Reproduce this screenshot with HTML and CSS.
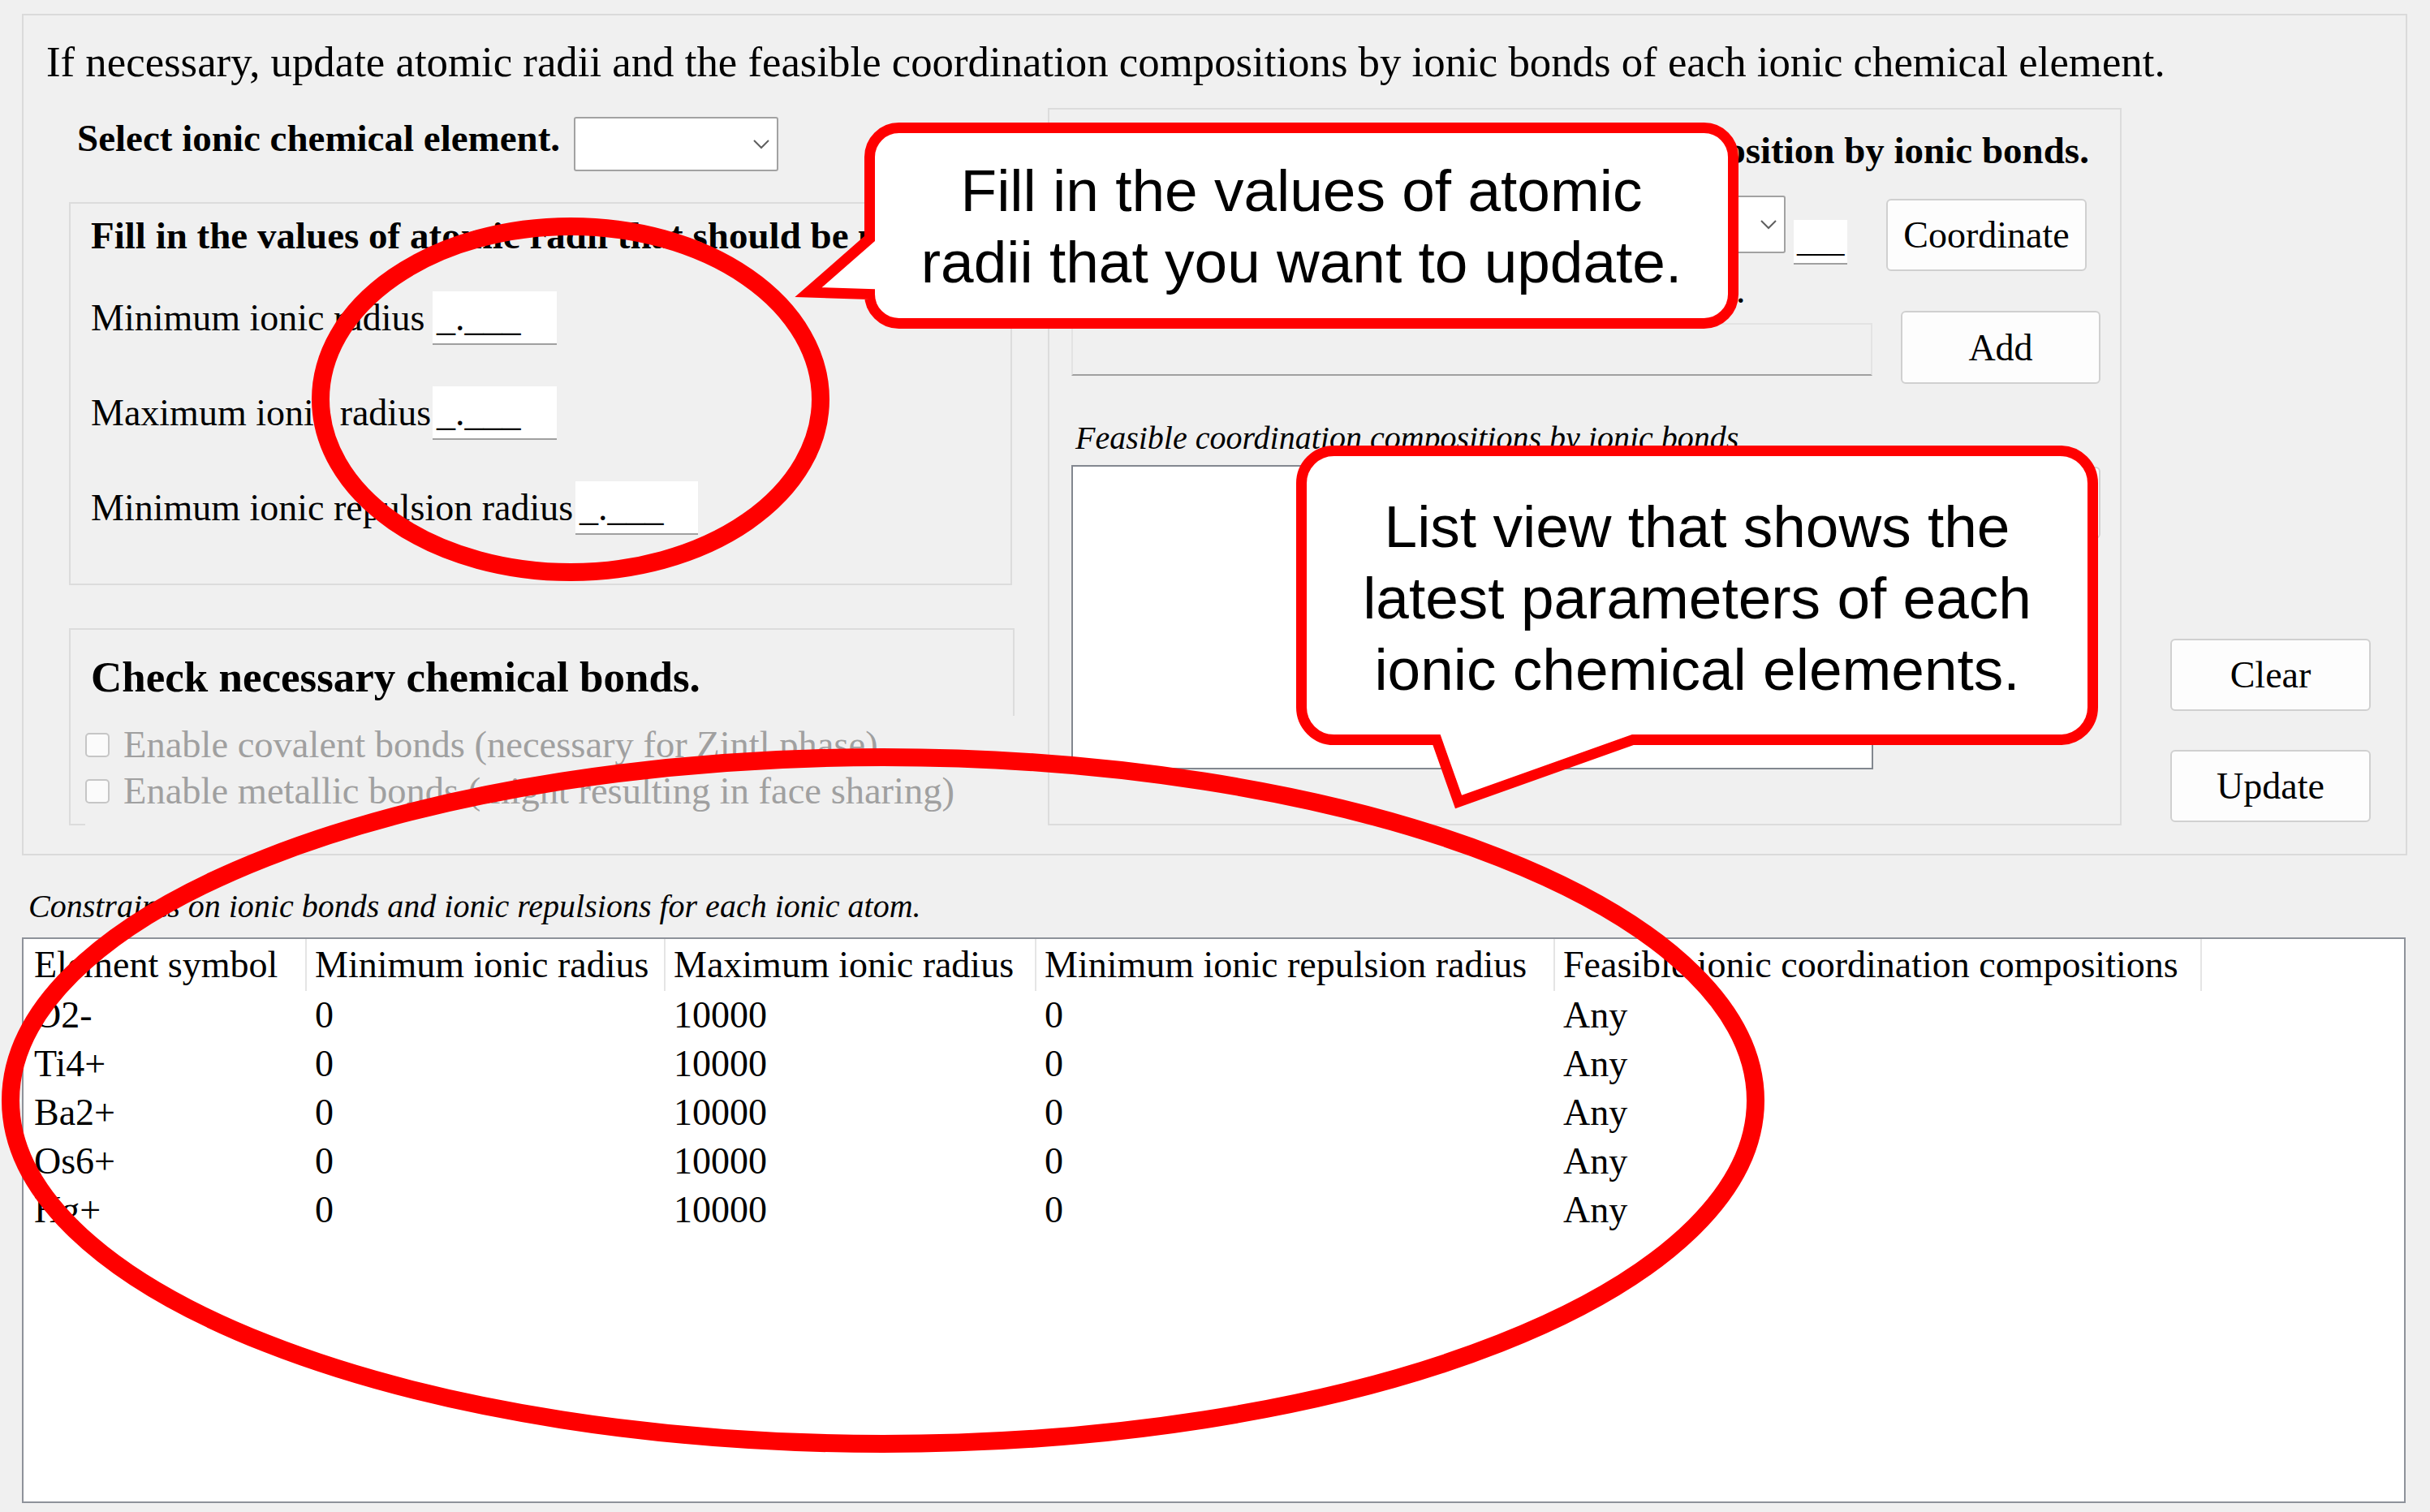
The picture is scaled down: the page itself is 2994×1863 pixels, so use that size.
FILE: index.html
```html
<!DOCTYPE html>
<html lang="en">

<head>
    <meta charset="UTF-8">
    <meta name="viewport" content="width=device-width, initial-scale=1.0">
    <title>Ionic chemical elements</title>
    <link rel="stylesheet" href="styles.css">
</head>

<body>

    <div class="top-panel">
        <div class="title">If necessary, update atomic radii and the feasible coordination compositions by ionic bonds of each ionic chemical element.</div>

        <div class="columns">
            <!-- left side: element + radii + bonds -->
            <div class="left-col">
                <div class="select-row">
                    <div class="select-label">Select ionic chemical element.</div>
                    <div class="combo"><svg class="chevron" width="20" height="12" viewBox="0 0 20 12"><path d="M1 1 L10 10 L19 1" fill="none" stroke="#5f5f5f" stroke-width="2"/></svg></div>
                </div>

                <div class="group radii-group">
                    <div class="group-title">Fill in the values of atomic radii that should be updated.</div>
                    <div class="radius-rows">
                        <div class="radius-row">
                            <div class="radius-label">Minimum ionic radius</div>
                            <div class="textbox">_.___</div>
                        </div>
                        <div class="radius-row">
                            <div class="radius-label">Maximum ionic radius</div>
                            <div class="textbox">_.___</div>
                        </div>
                        <div class="radius-row wide">
                            <div class="radius-label">Minimum ionic repulsion radius</div>
                            <div class="textbox">_.___</div>
                        </div>
                    </div>
                </div>

                <div class="group bonds-group">
                    <div class="group-title big">Check necessary chemical bonds.</div>
                    <div class="checks">
                        <div class="check-row"><span class="checkbox"></span><span class="check-label">Enable covalent bonds (necessary for Zintl phase)</span></div>
                        <div class="check-row"><span class="checkbox"></span><span class="check-label">Enable metallic bonds (might resulting in face sharing)</span></div>
                    </div>
                </div>
            </div>

            <!-- right side: coordination compositions -->
            <div class="group coord-group">
                <div class="group-title">Add the feasible ionic coordination composition by ionic bonds.</div>
                <div class="coord-row">
                    <div class="coord-label">Counter ion</div>
                    <div class="combo coord-combo"><svg class="chevron" width="20" height="12" viewBox="0 0 20 12"><path d="M1 1 L10 10 L19 1" fill="none" stroke="#5f5f5f" stroke-width="2"/></svg></div>
                    <div class="textbox small">___</div>
                    <button class="btn coordinate-btn">Coordinate</button>
                </div>
                <div class="coord-hint">Ionic coordination compositions to be added.</div>
                <div class="add-row">
                    <div class="readonly-box"></div>
                    <button class="btn add-btn">Add</button>
                </div>
                <div class="caption coord-caption">Feasible coordination compositions by ionic bonds</div>
                <div class="list-row">
                    <div class="listbox"></div>
                    <button class="btn delete-btn">Delete</button>
                </div>
            </div>

            <div class="button-col">
                <button class="btn">Clear</button>
                <button class="btn">Update</button>
            </div>
        </div>
    </div>

    <div class="caption table-caption">Constraints on ionic bonds and ionic repulsions for each ionic atom.</div>

    <div class="listview">
        <div class="lv-grid">
            <div class="lv-head first">Element symbol</div>
            <div class="lv-head">Minimum ionic radius</div>
            <div class="lv-head">Maximum ionic radius</div>
            <div class="lv-head">Minimum ionic repulsion radius</div>
            <div class="lv-head">Feasible ionic coordination compositions</div>

            <div class="lv-cell first">O2-</div><div class="lv-cell">0</div><div class="lv-cell">10000</div><div class="lv-cell">0</div><div class="lv-cell">Any</div>
            <div class="lv-cell first">Ti4+</div><div class="lv-cell">0</div><div class="lv-cell">10000</div><div class="lv-cell">0</div><div class="lv-cell">Any</div>
            <div class="lv-cell first">Ba2+</div><div class="lv-cell">0</div><div class="lv-cell">10000</div><div class="lv-cell">0</div><div class="lv-cell">Any</div>
            <div class="lv-cell first">Os6+</div><div class="lv-cell">0</div><div class="lv-cell">10000</div><div class="lv-cell">0</div><div class="lv-cell">Any</div>
            <div class="lv-cell first">Hg+</div><div class="lv-cell">0</div><div class="lv-cell">10000</div><div class="lv-cell">0</div><div class="lv-cell">Any</div>
        </div>
    </div>

    <!-- red annotation marks drawn over the form -->
    <svg class="marks" width="2994" height="1863" viewBox="0 0 2994 1863">
        <ellipse cx="703" cy="492" rx="308" ry="213" fill="none" stroke="#ff0000" stroke-width="22"/>
        <ellipse cx="1088" cy="1356" rx="1075" ry="423" fill="none" stroke="#ff0000" stroke-width="22"/>
        <path d="M1107.5 157.5 H2099.5 A36 36 0 0 1 2135.5 193.5 V362.5 A36 36 0 0 1 2099.5 398.5 H1107.5 A36 36 0 0 1 1071.5 362.5 L996 360 L1071.5 294 V193.5 A36 36 0 0 1 1107.5 157.5 Z" fill="#fff" stroke="#ff0000" stroke-width="13"/>
        <path d="M1643.5 555.5 H2538.5 A40 40 0 0 1 2578.5 595.5 V871.5 A40 40 0 0 1 2538.5 911.5 H2012 L1797 988 L1770 911.5 H1643.5 A40 40 0 0 1 1603.5 871.5 V595.5 A40 40 0 0 1 1643.5 555.5 Z" fill="#fff" stroke="#ff0000" stroke-width="13"/>
    </svg>

    <div class="note note-radii">Fill in the values of atomic<br>radii that you want to update.</div>
    <div class="note note-list">List view that shows the<br>latest parameters of each<br>ionic chemical elements.</div>

</body>

</html>
```

FILE: styles.css
```css
body {
    margin: 0;
    width: 2994px;
    height: 1863px;
    overflow: hidden;
    position: relative;
    background-color: #f0f0f0;
    font-family: "Liberation Serif", "Times New Roman", serif;
    font-size: 46px;
    color: #000;
}

.top-panel {
    margin: 17px 0 0 27px;
    width: 2939px;
    height: 1037px;
    box-sizing: border-box;
    border: 2px solid #dadada;
    display: flex;
    flex-direction: column;
}

.title {
    font-size: 52.8px;
    line-height: 60px;
    padding: 27px 0 0 28px;
    height: 60px;
    white-space: nowrap;
}

.columns {
    flex: 1;
    display: flex;
    align-items: flex-start;
    padding-left: 56px;
}

.left-col {
    width: 1165px;
    flex-shrink: 0;
}

/* element select */
.select-row {
    display: flex;
    align-items: flex-start;
    margin-top: 38px;
    padding-left: 10px;
    height: 67px;
}

.select-label {
    width: 612px;
    font-size: 47px;
    font-weight: bold;
    line-height: 52px;
    white-space: nowrap;
}

.combo {
    width: 252px;
    height: 67px;
    box-sizing: border-box;
    background-color: #fff;
    border: 2px solid #a2a2a2;
    border-radius: 3px;
    display: flex;
    align-items: center;
    justify-content: flex-end;
    padding-right: 9px;
}

/* group boxes */
.group {
    box-sizing: border-box;
    border: 2px solid #dcdcdc;
}

.group-title {
    font-size: 47px;
    font-weight: bold;
    line-height: 52px;
    padding-left: 25px;
    white-space: nowrap;
    overflow: hidden;
}

.group-title.big {
    font-size: 53px;
    line-height: 60px;
}

.radii-group {
    margin-top: 38px;
    width: 1162px;
    height: 472px;
    padding-top: 13px;
}

.radius-rows {
    margin-top: 43px;
    padding-left: 25px;
    display: flex;
    flex-direction: column;
    gap: 51px;
}

.radius-row {
    display: flex;
    align-items: flex-start;
    height: 66px;
}

.radius-label {
    width: 421px;
    line-height: 52px;
    padding-top: 7px;
    white-space: nowrap;
}

.radius-row.wide .radius-label {
    width: 597px;
}

.textbox {
    width: 153px;
    height: 66px;
    box-sizing: border-box;
    background-color: #fff;
    border-bottom: 2px solid #a0a0a0;
    padding: 7px 0 0 5px;
    line-height: 52px;
    white-space: nowrap;
}

.radius-row.wide .textbox {
    width: 151px;
}

.textbox.small {
    width: 66px;
    height: 55px;
    margin: 30px 0 0 10px;
    font-size: 39px;
    line-height: 46px;
    padding: 3px 0 0 4px;
}

.bonds-group {
    margin-top: 53px;
    width: 1165px;
    padding-top: 28px;
}

.checks {
    margin: 18px 0 -2px 18px;
    width: 1170px;
    padding: 7px 0 14px;
    background-color: #f0f0f0;
}

.check-row {
    display: flex;
    align-items: center;
    height: 57px;
}

.checkbox {
    width: 30px;
    height: 30px;
    box-sizing: border-box;
    border: 2px solid #c6c6c6;
    border-radius: 5px;
    background-color: #fbfbfb;
}

.check-label {
    margin-left: 17px;
    font-size: 46.5px;
    line-height: 57px;
    color: #a0a0a0;
    white-space: nowrap;
}

/* coordination group */
.coord-group {
    margin: 27px 0 0 41px;
    width: 1323px;
    height: 884px;
    flex-shrink: 0;
    padding-top: 24px;
}

.coord-group .group-title {
    padding-left: 13px;
}

.coord-row {
    display: flex;
    align-items: flex-start;
    margin-top: 30px;
    padding-left: 27px;
    height: 93px;
}

.coord-label {
    width: 540px;
    line-height: 71px;
    white-space: nowrap;
}

.coord-combo {
    width: 340px;
    height: 71px;
}

.coord-hint {
    margin-top: 1px;
    padding-left: 27px;
    line-height: 46px;
    white-space: nowrap;
}

.add-row {
    display: flex;
    align-items: flex-start;
    margin-top: 2px;
    padding-left: 27px;
    height: 90px;
}

.readonly-box {
    width: 987px;
    height: 65px;
    margin-top: 15px;
    box-sizing: border-box;
    border: 2px solid #e3e3e3;
    border-bottom-color: #a0a0a0;
}

.caption {
    font-size: 40px;
    font-style: italic;
    line-height: 46px;
    white-space: nowrap;
}

.coord-caption {
    margin-top: 44px;
    padding-left: 32px;
}

.list-row {
    display: flex;
    align-items: flex-start;
    margin-top: 10px;
    padding-left: 27px;
}

.listbox {
    width: 988px;
    height: 375px;
    box-sizing: border-box;
    background-color: #fff;
    border: 2px solid #82878f;
}

/* buttons */
.btn {
    width: 247px;
    height: 89px;
    box-sizing: border-box;
    padding: 0;
    background-color: #fdfdfd;
    border: 2px solid #d0d0d0;
    border-radius: 6px;
    font-family: "Liberation Serif", "Times New Roman", serif;
    font-size: 46px;
    color: #000;
}

.coordinate-btn {
    margin: 4px 0 0 48px;
}

.add-btn {
    width: 246px;
    height: 90px;
    margin-left: 35px;
}

.delete-btn {
    width: 246px;
    margin: 2px 0 0 34px;
}

.button-col {
    align-self: stretch;
    margin-left: 60px;
    display: flex;
    flex-direction: column;
    justify-content: flex-end;
    gap: 48px;
    padding-bottom: 39px;
}

/* lower list view */
.table-caption {
    margin: 40px 0 0 35px;
}

.listview {
    margin: 15px 0 0 27px;
    width: 2937px;
    height: 697px;
    box-sizing: border-box;
    background-color: #fff;
    border: 2px solid #8e929a;
}

.lv-grid {
    display: grid;
    grid-template-columns: 349px 442px 457px 639px 797px;
    justify-content: start;
}

.lv-head {
    line-height: 52px;
    padding: 6px 0 6px 10px;
    border-right: 2px solid #e5e5e5;
    white-space: nowrap;
    overflow: hidden;
}

.lv-cell {
    line-height: 60px;
    padding-left: 10px;
    white-space: nowrap;
}

.lv-head.first,
.lv-cell.first {
    padding-left: 13px;
}

/* annotations */
.marks {
    position: absolute;
    left: 0;
    top: 0;
    pointer-events: none;
}

.note {
    position: absolute;
    font-family: "Liberation Sans", Arial, sans-serif;
    font-size: 73px;
    line-height: 88px;
    text-align: center;
    white-space: nowrap;
}

.note-radii {
    left: 1065px;
    top: 191px;
    width: 1077px;
}

.note-list {
    left: 1597px;
    top: 605px;
    width: 988px;
}
```
